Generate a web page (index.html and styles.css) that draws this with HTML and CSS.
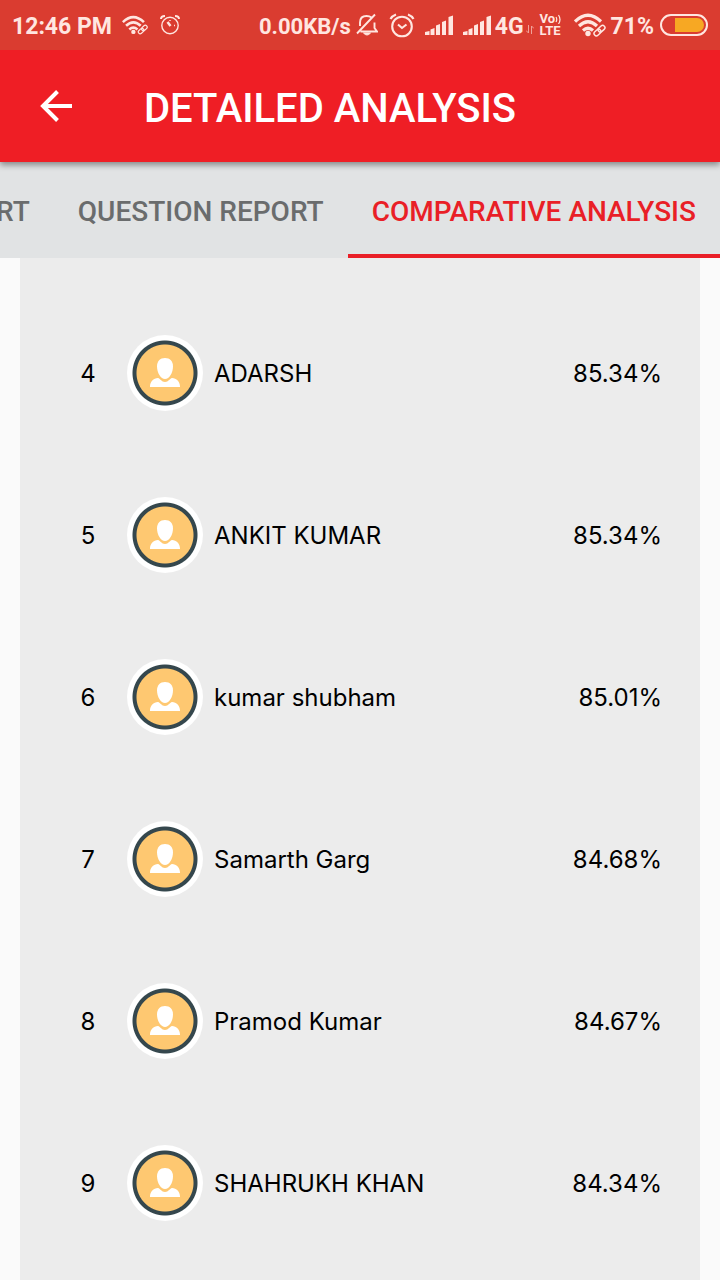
FILE: index.html
```html
<!DOCTYPE html>
<html lang="en">
<head>
<meta charset="utf-8">
<meta name="viewport" content="width=device-width, initial-scale=1">
<title>Detailed Analysis</title>
<link rel="stylesheet" href="styles.css">
</head>
<body>
<svg class="defs" aria-hidden="true">
  <symbol id="wifi" viewBox="0 0 32 24">
    <g fill="none" stroke="currentColor" stroke-width="3.200">
      <path d="M1 8.500Q14 -4 27 8.500"/>
      <path d="M5 13Q14 4.500 23 13"/>
      <path d="M9 17.500Q14 13 19 17.500"/>
    </g>
    <circle cx="14" cy="20.500" r="2.700" fill="currentColor"/>
    <g fill="none" stroke="currentColor" stroke-width="1.500">
      <rect x="-3.800" y="-2.300" width="7.600" height="4.600" rx="2.300" transform="translate(23.500 19.500) rotate(-42)"/>
      <rect x="-3.800" y="-2.300" width="7.600" height="4.600" rx="2.300" transform="translate(27.500 15.700) rotate(-42)"/>
    </g>
  </symbol>
  <symbol id="signal" viewBox="0 0 28 20">
    <path fill="currentColor" d="M0 20v-3l4.500-1v4zM5.500 20v-5.500l4-1.500v7zM11 20v-9.500l4-1.500v11zM17 20v-13l4-1.500v14.500zM23.500 20v-18l4.500-1.500v19.500z"/>
  </symbol>
  <symbol id="user" viewBox="0 0 30 30">
    <path fill="#fff" d="M15 0c5 0 8 3.300 8 8.300C23 15 19.300 21 15 21S7 15 7 8.300C7 3.300 10 0 15 0z"/>
    <path fill="#fff" d="M8 20c2 .300 3.500 4 7 4s5-3.700 7-4c4.500 .500 8 3.500 8 8.500V29H0v-.500c0-5 3.500-8 8-8.500z"/>
  </symbol>
</svg>

<div class="status">
  <span class="status-text">12:46 PM</span>
  <svg class="wifi-small"><use href="#wifi"/></svg>
  <svg class="alarm-small" viewBox="0 0 20 20" fill="none" stroke="currentColor" stroke-width="1.400">
    <circle cx="10" cy="10.500" r="8.200"/>
    <path d="M1 4Q1 1 5 1M15 1q4 0 4 3" stroke-width="2"/>
    <path d="M7.500 7l3 4" stroke-width="2.500"/><path d="M10 5v1M14 10.500h1"/>
  </svg>
  <div class="status-right">
    <span class="status-text speed">0.00KB/s</span>
    <svg class="bell" viewBox="0 0 22 24" fill="none" stroke="currentColor" stroke-width="1.900">
      <path d="M4.500 18.500h16.500l-2.500-3.500V9.500M4 13V9.500C4 5 7 3 10.500 3q3 0 5 1.500M1 20.500L19 1.500"/>
      <path d="M7.500 20q3.500 4 7 0z" fill="currentColor" stroke-width="1"/>
    </svg>
    <svg class="alarm" viewBox="0 0 26 25" fill="none" stroke="currentColor" stroke-width="2.100">
      <circle cx="13" cy="13.500" r="9.800"/>
      <path d="M1.500 6Q3 3 7 1.500M19 1.500q4 1.500 5.500 4.500"/>
      <path d="M9 11.500l4 3.500 4.500-3.500"/>
    </svg>
    <svg class="signal"><use href="#signal"/></svg>
    <svg class="signal signal-second"><use href="#signal"/></svg>
    <span class="status-text">4G</span>
    <svg class="data" viewBox="0 0 8 9" fill="none" stroke="currentColor" stroke-width="1"><path d="M2.500 0v8L0 5.500M5.500 9V1L8 3.500"/></svg>
    <span class="volte">
      <span class="volte-line">Vo<svg viewBox="0 0 6 10" fill="none" stroke="currentColor" stroke-width="1.200"><path d="M1 3q1.500 2.500 0 5M3.500 1q3 4.500 0 9"/></svg></span>
      <span class="volte-line">LTE</span>
    </span>
    <svg class="wifi"><use href="#wifi"/></svg>
    <span class="status-text">71%</span>
    <span class="battery"><span class="battery-level"></span></span>
  </div>
</div>

<header class="appbar">
  <button class="back" type="button" aria-label="Back">
    <svg viewBox="0 0 32 32" fill="none" stroke="#fff" stroke-width="4"><path d="M32 16H4M17.500 1.500L3 16l14.500 14.500"/></svg>
  </button>
  <h1 class="title">DETAILED ANALYSIS</h1>
</header>

<nav class="tabs">
  <a class="tab" href="#report">RT</a>
  <a class="tab" href="#question">QUESTION REPORT</a>
  <a class="tab active" href="#comparative">COMPARATIVE ANALYSIS</a>
</nav>

<main class="content">
  <ol class="ranking">
    <li class="row"><span class="rank">4</span><span class="avatar"><svg><use href="#user"/></svg></span><span class="name">ADARSH</span><span class="score">85.34%</span></li>
    <li class="row"><span class="rank">5</span><span class="avatar"><svg><use href="#user"/></svg></span><span class="name">ANKIT KUMAR</span><span class="score">85.34%</span></li>
    <li class="row"><span class="rank">6</span><span class="avatar"><svg><use href="#user"/></svg></span><span class="name">kumar shubham</span><span class="score">85.01%</span></li>
    <li class="row"><span class="rank">7</span><span class="avatar"><svg><use href="#user"/></svg></span><span class="name">Samarth Garg</span><span class="score">84.68%</span></li>
    <li class="row"><span class="rank">8</span><span class="avatar"><svg><use href="#user"/></svg></span><span class="name">Pramod Kumar</span><span class="score">84.67%</span></li>
    <li class="row"><span class="rank">9</span><span class="avatar"><svg><use href="#user"/></svg></span><span class="name">SHAHRUKH KHAN</span><span class="score">84.34%</span></li>
  </ol>
</main>
</body>
</html>
```
FILE: styles.css
```css
* { box-sizing: border-box; }
body {
  margin: 0;
  min-height: 100vh;
  display: flex;
  flex-direction: column;
  overflow-x: hidden;
  background: #fafafa;
  font-family: Roboto, "Liberation Sans", sans-serif;
}
svg { display: block; flex: none; }
.defs { position: absolute; width: 0; height: 0; }

.status {
  display: flex;
  align-items: center;
  height: 50px;
  padding: 0 12px;
  background: #da3c30;
  color: #ffe6e0;
}
.status-text { padding-top: 3px; font-size: 23px; line-height: 28px; font-weight: 700; white-space: nowrap; }
.speed { font-size: 22px; }
.status-right { display: flex; align-items: center; margin-left: auto; }
.wifi-small { width: 26px; height: 20px; margin-left: 10px; }
.alarm-small { width: 20px; height: 20px; margin-left: 12px; }
.bell { width: 22px; height: 24px; margin-left: 5px; }
.alarm { width: 26px; height: 25px; margin-left: 11px; }
.signal { width: 28px; height: 20px; margin-left: 10px; }
.signal-second { margin-right: 4px; }
.data { width: 8px; height: 9px; margin: 8px 6px 0 2px; opacity: 0.6; }
.volte { width: 24px; font-size: 13px; line-height: 12px; font-weight: 700; }
.volte-line { display: flex; align-items: center; height: 12px; }
.volte-line svg { width: 6px; height: 10px; }
.wifi { width: 32px; height: 24px; margin: 0 5px 0 10px; }
.battery {
  width: 48px;
  height: 22px;
  margin-left: 6px;
  padding: 2px;
  border: 2px solid #ffe6e0;
  border-radius: 11px;
  display: flex;
  justify-content: flex-end;
}
.battery-level { width: 29px; background: #f7a823; border-radius: 0 7px 7px 0; }

.appbar {
  position: relative;
  display: flex;
  align-items: center;
  height: 112px;
  padding: 0 32px;
  gap: 64px;
  background: #ef1e25;
  box-shadow: 0 3px 6px rgba(0, 0, 0, 0.4);
  clip-path: inset(0 0 -16px 0);
}
.back { padding: 8px; border: 0; background: none; }
.back svg { width: 32px; height: 32px; }
.title { margin: 6px 0 0; color: #fff; font-size: 40px; line-height: 48px; font-weight: 500; white-space: nowrap; }

.tabs {
  display: flex;
  justify-content: flex-end;
  height: 96px;
  background: #e1e3e4;
  overflow: hidden;
}
.tab {
  flex: none;
  display: flex;
  align-items: center;
  padding: 8px 24px 0;
  border-bottom: 4px solid transparent;
  color: #6a6c6d;
  font-size: 28px;
  line-height: 32px;
  font-weight: 500;
  text-decoration: none;
  white-space: nowrap;
}
.tab.active { color: #e91f27; border-color: #e91f27; }

.content { flex: 1; padding: 0 20px; }
.ranking {
  min-height: 100%;
  margin: 0;
  padding: 34px 38px 16px 40px;
  list-style: none;
  background: #ececec;
  color: #000;
  font: 24px/32px Inter, "Liberation Sans", sans-serif;
}
.row { display: flex; align-items: center; height: 162px; }
.rank { width: 56px; padding-top: 2px; text-align: center; }
.avatar {
  flex: none;
  display: flex;
  align-items: center;
  justify-content: center;
  width: 76px;
  height: 76px;
  margin: 0 11px;
  border-radius: 50%;
  background: radial-gradient(circle, #fec871 28px, #35474d 29px, #35474d 32px, #fff 33px);
}
.avatar svg { width: 30px; height: 30px; }
.name { flex: 1; padding-top: 2px; }
.score { padding-top: 2px; }
```
